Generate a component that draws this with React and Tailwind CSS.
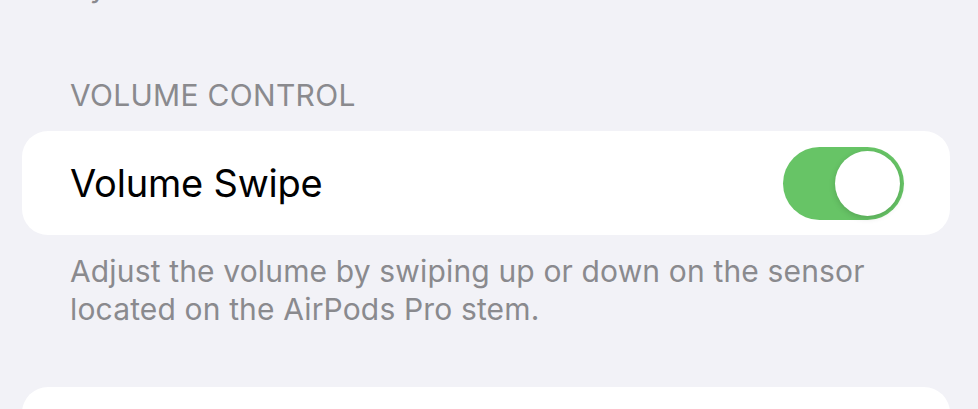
import React, { useState } from 'react';

const Toggle = ({ on, onChange }) => (
	<button
		onClick={() => onChange(!on)}
		className={`w-[121px] h-[73px] rounded-full p-[4px] flex items-center transition-colors ${
			on ? 'bg-[#67c466] justify-end' : 'bg-[#e9e9eb] justify-start'
		}`}
	>
		<span className="block w-[65px] h-[65px] rounded-full bg-white shadow-[0_2px_6px_rgba(0,0,0,0.15)]" />
	</button>
);

const App = () => {
	const [volumeSwipe, setVolumeSwipe] = useState(true);

	return (
		<div
			className="w-[978px] h-[409px] overflow-hidden bg-[#f2f2f7]"
			style={{ fontFamily: 'Inter, "Noto Sans", sans-serif' }}
		>
			{/* tail of previous footer */}
			<p className="mt-[-33px] pl-[70px] text-[30px] leading-[38px] text-[#8a8a8e]">
				By
			</p>

			{/* section header */}
			<h2 className="mt-[72px] pl-[70px] text-[30px] leading-[36px] tracking-[0.3px] text-[#8a8a8e]">
				VOLUME CONTROL
			</h2>

			{/* card */}
			<div className="mt-[18px] mx-[22px] w-[928px] h-[104px] bg-white rounded-[26px] flex items-center justify-between pl-[48px] pr-[46px]">
				<span className="text-[38px] text-black tracking-[-0.2px]">Volume Swipe</span>
				<Toggle on={volumeSwipe} onChange={setVolumeSwipe} />
			</div>

			{/* footer */}
			<p className="mt-[17px] pl-[70px] pr-[30px] text-[30px] leading-[38px] tracking-[0.15px] text-[#8a8a8e]">
				Adjust the volume by swiping up or down on the sensor
				<br />
				located on the AirPods Pro stem.
			</p>

			{/* next card */}
			<div className="mt-[59px] mx-[22px] w-[928px] h-[104px] bg-white rounded-[26px]" />
		</div>
	);
};

export default App;
